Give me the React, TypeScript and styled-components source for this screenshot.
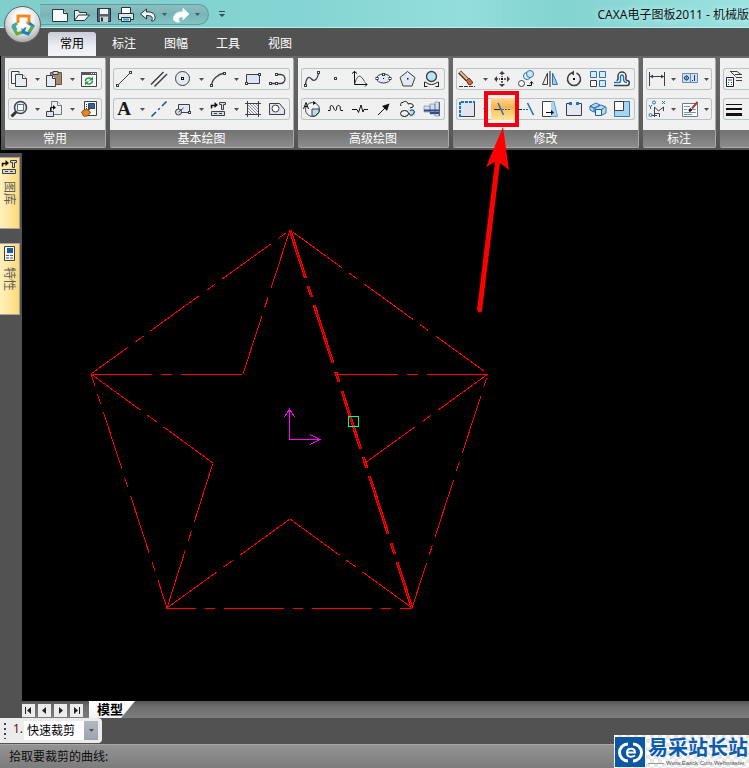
import React from "react";
import styled, { createGlobalStyle, css } from "styled-components";

const GlobalStyle = createGlobalStyle`
  * { box-sizing: border-box; }
  html, body, #root { height: 100%; }
  body {
    margin: 0;
    background: #000;
    overflow: hidden;
    font: 12px/16px "Noto Sans", "Noto Sans CJK SC", sans-serif;
  }
  button, select { font: inherit; }
`;

const INK = "#3c3f44";
const BLUE = "#2a72b5";

/* ---------- Icons (16 x 16 grid) ---------- */

type GlyphProps = { children: React.ReactNode; size?: number };

const GlyphSvg = styled.svg`
  display: block;
  flex: none;
  overflow: visible;
`;

const Glyph = ({ children, size = 16 }: GlyphProps) => (
  <GlyphSvg width={size} height={size} viewBox="0 0 16 16" fill="none" stroke={INK} strokeWidth="1" aria-hidden="true">
    {children}
  </GlyphSvg>
);

const Node = ({ x, y }: { x: number; y: number }) => (
  <rect x={x - 1} y={y - 1} width="2" height="2" fill="#fff" stroke={INK} />
);

const icons: Record<string, React.ReactNode> = {
  copy: (
    <>
      <path d="M4.5 12.5h-4V.5h7.500v2" fill="#f4f4f4" />
      <path d="M4.500 3.500h7l4 4v8h-11z" fill="#e9ecf1" />
      <path d="M11.500 3.500v4h4" fill="#fff" />
    </>
  ),
  paste: (
    <>
      <path d="M4.500 1.500h11v12h-11z" fill="#a28a6e" stroke="#6a5540" />
      <path d="M7 .5h5v3H7z" fill="#d8dade" />
      <path d="M.5 4.500h6l3 3v8h-9z" fill="#e6ebf4" />
      <path d="M6.500 4.500v3h3" fill="#fff" />
    </>
  ),
  refresh: (
    <>
      <path d="M.5 1.500h15v14H.5z" fill="#fafafa" />
      <path d="M0 1h16v3H0z" fill="#55585e" stroke="none" />
      <path d="M10 2.500h1M12 2.500h1M14 2.500h1" stroke="#fff" />
      <path d="M4.500 10c0-3 4-4 6-2M11.500 10c0 3-4 4-6 2" stroke="#1f9a3c" strokeWidth="1.500" />
      <path d="M12 5.500v4H8zM4 14.500v-4h4z" fill="#1f9a3c" stroke="none" />
    </>
  ),
  zoom: (
    <>
      <path d="M5.500 10.500l-5 5" stroke="#333" strokeWidth="3" />
      <circle cx="9.500" cy="6.500" r="6" fill="#d9edf6" strokeWidth="1.500" />
      <rect x="6.500" y="3.500" width="6" height="6" fill="#fff" stroke="#68727a" />
    </>
  ),
  move: (
    <>
      <path d="M5.500.5h6l4 4v9h-10z" fill="#eceef2" stroke="#73777e" />
      <path d="M11.500.5v4h4" fill="#fff" stroke="#73777e" />
      <path d="M.5 10.500h7v5h-7z" fill="#dfe3ea" />
      <path d="M4.500 10V6.500h3" stroke="#111" />
      <path d="M7 4v5l3-2.500z" fill="#111" stroke="none" />
    </>
  ),
  brush: (
    <>
      <path d="M3.500.5h12v14h-12z" fill="#fdfdfd" />
      <path d="M7.500 2.500h6v5h-6z" fill="#2b62a8" stroke="#1c4780" />
      <path d="M5 3.500h1M5 5.500h1M5 7.500h1" />
      <path d="M.5 11c2-2 4-3 6-2l3 2c-1 3-4 5-7 4z" fill="#e48a25" stroke="#8a4a10" />
      <path d="M7 9l3-3" stroke="#7a3a10" strokeWidth="2" />
    </>
  ),
  line: (
    <>
      <path d="M1.500 14.500l13-13" />
      <Node x={1.5} y={14.5} />
      <Node x={14.5} y={1.5} />
    </>
  ),
  parallel: <path d="M0 13.500L12.500 1M3.500 15.500L16 3" strokeWidth="1.500" />,
  circle: (
    <>
      <circle cx="7.500" cy="7.500" r="7" fill="#e4e9f3" />
      <rect x="6.500" y="6.500" width="2" height="2" fill="#fff" stroke="#111" />
    </>
  ),
  arc: (
    <>
      <path d="M1.500 14.500C2 8 8 3 14.500 2" strokeWidth="1.300" />
      <Node x={1.5} y={14.5} />
      <Node x={14.5} y={2.5} />
    </>
  ),
  rect: (
    <>
      <path d="M1.500 3.500h13v9h-13z" fill="#dde3ef" />
      <Node x={1.5} y={12.5} />
      <Node x={14.5} y={3.5} />
    </>
  ),
  polyline: (
    <>
      <path d="M1.500 12.500h6M7.500 3.500h4a4.500 4.500 0 0 1 0 9h-3" strokeWidth="1.300" />
      <Node x={1.5} y={12.5} />
      <Node x={7.5} y={12.5} />
      <Node x={7.5} y={3.5} />
    </>
  ),
  text: (
    <text x="8" y="14" textAnchor="middle" fontFamily="Liberation Serif, serif" fontWeight="700" fontSize="19" fill="#16181c" stroke="none">
      A
    </text>
  ),
  center: <path d="M.5 15.500l4.500-4.500M7.200 8.800l1.600-1.600M11 5l4.500-4.500" stroke="#14509a" strokeWidth="1.500" />,
  block: (
    <>
      <path d="M3.500 3.500h11v8h-11z" fill="#e4e8f0" />
      <circle cx="3.500" cy="11" r="3" fill="#d7dbe2" />
      <path d="M3.500 11l5-4" />
      <Node x={14.5} y={11.5} />
    </>
  ),
  library: (
    <>
      <path d="M1.500 7.500v-3h4" stroke="#111" strokeWidth="1.500" />
      <path d="M4.500 1v6l3.500-3z" fill="#111" stroke="none" />
      <path d="M9.500 1.500h6v2h-2v5h-2v-5h-2z" fill="#d7dbe2" />
      <path d="M1.500 10.500h13v4h-13z" fill="#d7dbe2" />
      <path d="M4 12.500h3M9 12.500h3" />
    </>
  ),
  hatch: (
    <>
      <path d="M2.500 0v16M13.500 0v16M0 2.500h16M0 13.500h16" />
      <path d="M3 10l3 3M3 7l6 6M3 4l9 9M5 3l8 8M8 3l5 5M11 3l2 2" stroke="#8b9099" />
    </>
  ),
  hole: (
    <>
      <path d="M.5 2.500h10l5 6v5H.5z" fill="#e1e5ec" />
      <circle cx="6.500" cy="7.500" r="3.500" fill="#fff" />
    </>
  ),
  spline: (
    <>
      <path d="M1.500 14.500C2 6 5 5 7.500 8s6 1 7-6" strokeWidth="1.300" />
      <Node x={1.5} y={14.5} />
      <Node x={14.5} y={1.5} />
    </>
  ),
  point: <Node x={7.5} y={7.5} />,
  curve: (
    <>
      <path d="M2.500 0v13.500H15M0 2.500L2.500.5 5 2.500M13 11.500l2 2-2 2" stroke="#111" />
      <path d="M2.500 13.500c3-11 6-10 10-3" />
    </>
  ),
  ellipse: (
    <>
      <ellipse cx="7.500" cy="7.500" rx="7" ry="4.500" fill="#e4e8f0" />
      <Node x={7.5} y={3.5} />
      <Node x={1} y={7.5} />
      <Node x={14} y={7.5} />
      <rect x="7" y="7" width="1" height="1" fill="#111" stroke="none" />
    </>
  ),
  polygon: (
    <>
      <path d="M7.500.5l7.500 6-3 8.500H3L0 6.500z" fill="#e4e8f0" />
      <rect x="7" y="7" width="1.500" height="1.500" fill="#111" stroke="none" />
    </>
  ),
  bulb: (
    <>
      <circle cx="7.500" cy="5.500" r="5" fill="#b8e6f6" strokeWidth="1.300" />
      <path d="M.5 16v-5M14.500 16v-5M.5 11c2 0 3 2.500 7 2.500s5-2.500 7-2.500M.5 15.500h3M11.500 15.500h3" stroke="#222" />
    </>
  ),
  sector: (
    <>
      <circle cx="8.500" cy="8.500" r="7" fill="#f3f5f8" />
      <path d="M8 8h7v3l-4 4H8z" fill="#b6dcee" />
      <path d="M-.5 8L2 1.500 4.500 8M.5 5.500h3" stroke="#111" />
      <path d="M9 4V0l3 2z" fill="#111" stroke="none" />
    </>
  ),
  wave: (
    <path
      d="M0 9.500h2c1 0-1-5 1.500-5s2 5 4 5 0-5 3-5 1 5 2.500 5h2"
      stroke="#111"
    />
  ),
  breakline: <path d="M0 8.500h5l1.500 3L9 4l2 7 1-2.500h4" stroke="#111" />,
  arrow: (
    <>
      <path d="M2 14l7-7" stroke="#111" />
      <path d="M13.500 2.500L11 10 6 5z" fill="#111" stroke="none" />
    </>
  ),
  gears: (
    <>
      <path d="M8 8l7 1v6l-5 1z" fill="#bde3f3" stroke="none" />
      <path d="M1 5c-1-2 0-4 2-3.500C5-1 8 1 8 3c3-1 6 0 5 3l-3 1" stroke="#111" />
      <ellipse cx="4.500" cy="12.500" rx="4" ry="3" stroke="#111" />
      <path d="M10 10c2-2 5-1 4 2s-5 3-5 0" stroke="#111" />
    </>
  ),
  shaft: (
    <>
      <path d="M0 5h6v6H0zM6 3h5v10H6zM11 1h4v14h-4z" fill="#d5deec" stroke="#5a6a88" strokeWidth=".5" />
      <path d="M0 9.500h15M6 12h9" stroke="#2f4f88" strokeWidth="2" />
      <path d="M15.500 1v14" stroke="#52617e" />
    </>
  ),
  erase: (
    <>
      <path d="M.5 1l8 8" stroke="#4a3424" strokeWidth="4" />
      <path d="M1 1l8 8" stroke="#e9c088" strokeWidth="2" />
      <path d="M7.500 9.500l2.500-2.500 3.500 4c0 2-2 3.500-4 2.500z" fill="#d0673a" stroke="#6b2a10" />
      <path d="M0 15.500h16" stroke="#333" strokeDasharray="4 1" />
    </>
  ),
  pan: (
    <>
      <path d="M8 2v4M8 10v4M2 8h4M10 8h4" strokeDasharray="2 1" strokeWidth="1.500" />
      <path d="M8 0l3 3H5zM8 16l3-3H5zM0 8l3-3v6zM16 8l-3-3v6z" fill={INK} stroke="none" />
      <rect x="7" y="7" width="2" height="2" fill="#111" stroke="none" />
    </>
  ),
  duplicate: (
    <>
      <circle cx="9" cy="5" r="3.500" stroke={BLUE} fill="#e2f1fb" />
      <circle cx="12" cy="3" r="3.500" stroke={BLUE} fill="#cfe8f8" />
      <circle cx="3.500" cy="12.500" r="3" fill="#fff" />
      <path d="M9 14.500h4.500V11M12 12.500l1.500-2 1.500 2" stroke="#111" />
    </>
  ),
  mirror: (
    <>
      <path d="M5.500 2v11.500H.5z" fill="#e9e9e9" />
      <path d="M10.500 2v11.500h5z" fill="#9dd0ee" stroke={BLUE} />
      <path d="M8 0v16" stroke="#222" />
    </>
  ),
  rotate: (
    <>
      <path d="M5.500 2a6.500 6.500 0 1 0 5 0" strokeWidth="1.500" />
      <path d="M8-.5v5L4.500 2z" fill={INK} stroke="none" />
      <rect x="7" y="7" width="2" height="2" fill="#111" stroke="none" />
    </>
  ),
  array: (
    <>
      <path d="M.5.5h6v6h-6zM9.500.5h6v6h-6zM9.500 9.500h6v6h-6z" fill="#d6ecfa" stroke={BLUE} />
      <path d="M.5 9.500h6v6h-6z" fill="#fff" />
    </>
  ),
  offset: (
    <>
      <path
        d="M2.500 9.500c2 0 1.500-2 1.500-4.500a4 4 0 0 1 8 0c0 2.500-.5 4.500 1 4.500 3 0 3 5 0 5H0"
        fill="#fff"
        strokeWidth="1.500"
      />
      <path d="M0 11.500h5c2 0 1.500-2 1.500-6a1.500 1.500 0 0 1 3 0c0 4 0 6 3.500 6" stroke="#1c74c4" strokeWidth="1.500" />
    </>
  ),
  select: (
    <>
      <path d="M.5.5h15v15H.5z" fill="#e2e5ee" />
      <path d="M1 16V1H16" stroke="#e2e5ee" strokeWidth="2" />
      <path d="M1 16V1H16" stroke="#1c74c4" strokeWidth="2" strokeDasharray="3 1" />
    </>
  ),
  trim: (
    <>
      <path d="M4 2l5.500 12" stroke="#176fc0" strokeWidth="1.500" />
      <path d="M0 8.500h6" stroke="#222" />
      <path d="M8 8.500h8" stroke="#176fc0" strokeDasharray="2 1" />
    </>
  ),
  extend: (
    <>
      <path d="M9.500 2l6 12" stroke="#176fc0" strokeWidth="1.500" />
      <path d="M-1 8.500h5" stroke="#222" />
      <path d="M5 8.500h6" stroke="#176fc0" strokeDasharray="2 1" />
    </>
  ),
  stretch: (
    <>
      <path d="M9.500.5h2.500l3.500 15h-6z" fill="#a8d6ef" stroke="#6aa5cf" />
      <path d="M9.500.5h-9v15h9" fill="#fff" />
      <path d="M4 11.500h6" stroke="#111" />
      <path d="M9 9v5l3-2.500z" fill="#111" stroke="none" />
    </>
  ),
  split: (
    <>
      <path d="M3.500 2.500h-3v12h15v-12h-3" fill="#e4e8f0" />
      <path d="M3 1h3v3H3zM10 1h3v3h-3z" fill="#1c74c4" stroke="none" />
    </>
  ),
  explode: (
    <>
      <path d="M0 5l6-3 4 2-6 3zM0 5v4l4 2V7zM5 7l6-3 5 2v6l-4 2-7-2z" fill="#b5dcf2" stroke={BLUE} />
      <path d="M5.500 8.500h6v6h-6zM11.500 8.500l3-2" fill="#e7f4fc" stroke="#1c5d9c" />
    </>
  ),
  scale: (
    <>
      <path d="M.5.5h15v15H.5z" fill="#a9d4ec" stroke="#337fb8" />
      <path d="M.5.5h9v9h-9z" fill="#fff" />
    </>
  ),
  dimension: (
    <>
      <path d="M.5 1v14M15.500 1v14M1 5.500h14" />
      <path d="M1 5.500l3-2v4zM15 5.500l-3-2v4z" fill={INK} stroke="none" />
    </>
  ),
  tolerance: (
    <>
      <path d="M.5 2.500h15v9H.5z" fill="#cfe2f4" stroke="#6d88a8" />
      <path d="M8.500 3v8" stroke="#6d88a8" />
      <circle cx="4.500" cy="7" r="2" stroke="#123c78" />
      <path d="M1.500 7h6M4.500 4v6" stroke="#123c78" strokeWidth=".5" />
      <path d="M12.500 4v6M10 9.500h1" stroke="#123c78" />
    </>
  ),
  coordinate: (
    <>
      <path d="M5.500 16V6l4 4 5-4v4M5.500 12.500h5V16M3 14.500h5" />
      <circle cx="5" cy="1.500" r="1.500" stroke={BLUE} />
      <path d="M13 0l3 3M16 0l-3 3M0 4l1.500 2L3 4M1.500 6v2" stroke={BLUE} />
      <circle cx="1.500" cy="14" r="1.500" stroke={BLUE} />
    </>
  ),
  edit: (
    <>
      <path d="M.5 2.500h15v13H.5z" fill="#fff" stroke="#6b7a90" />
      <path d="M2 5.500h6M2 8.500h3M10 8.500h4M2 11.500h12M2 13.500h8" stroke="#7793b5" />
      <path d="M7 10c0-2 1-3 2-2l1 1c-1 1-2 2-3 1z" fill="#222" stroke="#222" />
      <path d="M10 7.500L15.500 1" stroke="#a8401c" strokeWidth="2" />
    </>
  ),
  style: (
    <>
      <path d="M4 .5h7l4 3M9 3.500h7M10 6.500h6M10 9.500h6M4.500 .5l5 5" />
      <path d="M.5 6.500h7v9h-7z" fill="#fff" stroke="#222" />
      <path d="M2 9h4M2 11.500h1M5 11.500h1M2 13.500h1M5 13.500h1" stroke="#1c5d9c" />
    </>
  ),
  weight: (
    <>
      <path d="M0 3.500h16" stroke="#111" />
      <path d="M0 8h16" stroke="#111" strokeWidth="2" />
      <path d="M0 13.500h16" stroke="#111" strokeWidth="3" />
    </>
  ),
  newFile: (
    <>
      <path d="M.5 2.500h11l4 4v8H.5z" fill="#f7fafc" stroke="#26343b" />
      <path d="M11.500 2.500v4h4" fill="#c8d4da" stroke="#26343b" />
    </>
  ),
  open: (
    <>
      <path d="M.5 14V3.500h4l1 2h7V8" fill="#e7eef0" stroke="#26343b" />
      <path d="M.5 13.500l4-5.500h11l-5 5.500z" fill="#f3f7f8" stroke="#26343b" />
    </>
  ),
  save: (
    <>
      <path d="M1.500 1.500h13v13h-13z" fill="#56616b" stroke="#26343b" />
      <path d="M4 2h8v5H4z" fill="#eef3f6" stroke="none" />
      <path d="M4 9.500h8V15H4z" fill="#c9d2d8" stroke="none" />
      <path d="M5 10.500h2v4H5z" fill="#26343b" stroke="none" />
    </>
  ),
  print: (
    <>
      <path d="M3.500 6V.5h9V6" fill="#fff" stroke="#26343b" />
      <path d="M.5 6.500h15v6H.5z" fill="#dfe6e9" stroke="#26343b" />
      <path d="M3.500 10.500h9v4h-9z" fill="#e8f8ff" stroke="#26343b" />
      <path d="M5 12.500h6" stroke="#1aa5d8" strokeWidth="2" />
    </>
  ),
  undo: (
    <path d="M.5 7l6-5v3c6-.5 9 2 8.500 7l-1.500 2h-2c2-4 0-5.500-5-5.500V12z" fill="#eef4f5" stroke="#26343b" />
  ),
  redo: <path d="M16 7l-6-5.500V5C3 4.500 0 8 .5 13l3 2h3c-2-4 0-5.500 3.500-5V13z" fill="#fff" stroke="#e9f8f8" />,
};

/* ---------- Title bar ---------- */

const Page = styled.div`
  position: relative;
  display: flex;
  flex-direction: column;
  height: 100vh;
  min-width: 0;
  overflow: hidden;
  background: #000;
`;

const TitleBar = styled.header`
  display: flex;
  align-items: center;
  flex: none;
  height: 28px;
  padding: 0 0 0 40px;
  background: linear-gradient(90deg, #7fcfcd 0%, #84d4d3 40%, #93dedc 62%, #82d3d1 75%, #9be2e0 100%);
  border-bottom: 1px solid #b9ecea;
`;

const QuickBar = styled.div`
  display: flex;
  align-items: center;
  flex: none;
  height: 21px;
  width: 169px;
  padding-left: 9px;
  margin-top: 2px;
  gap: 1px;
  border: 1px solid #5f9da0;
  border-left: 0;
  border-radius: 0 11px 11px 0;
  background: linear-gradient(#8dbfc1, #79b4b7 50%, #84c3c4);
`;

const QuickButton = styled.button<{ $slim?: boolean }>`
  display: flex;
  align-items: center;
  justify-content: center;
  flex: none;
  width: ${(p) => (p.$slim ? 10 : 21)}px;
  height: 18px;
  padding: 0;
  border: 0;
  background: none;
`;

const MoreButton = styled(QuickButton)`
  margin-left: 8px;
`;

const Title = styled.h1`
  margin: 3px 0 0 auto;
  font-size: 12px;
  line-height: 16px;
  font-weight: 400;
  white-space: nowrap;
  color: #0c1416;
  text-shadow: 0 0 6px #dffafa;
`;

const Orb = styled.button`
  position: absolute;
  left: 4px;
  top: 6px;
  z-index: 3;
  width: 37px;
  height: 37px;
  padding: 0;
  display: grid;
  place-items: center;
  border: 1px solid #5c6365;
  border-radius: 50%;
  background: radial-gradient(circle at 50% 35%, #fff 0 25%, #d8d8d8 55%, #a0a0a0 85%, #e8e8e8 100%);
`;

/* ---------- Tabs ---------- */

const TabBar = styled.nav`
  display: flex;
  align-items: flex-end;
  flex: none;
  height: 28px;
  padding-left: 46px;
  background: #525252;
`;

const Tab = styled.button<{ $active?: boolean }>`
  width: 52px;
  height: 26px;
  padding: 0;
  border: 2px solid transparent;
  border-bottom: 0;
  border-radius: 5px 5px 0 0;
  background: none;
  color: #fff;
  ${(p) =>
    p.$active &&
    css`
      color: #000;
      background: linear-gradient(#c9ccd6, #eceef4 60%, #f3f4f8) padding-box;
    `}
`;

/* ---------- Ribbon ---------- */

const Ribbon = styled.section`
  position: relative;
  z-index: 2;
  display: flex;
  flex: none;
  gap: 4px;
  height: 94px;
  padding: 2px 0 2px 4px;
  margin-left: 1px;
  background: linear-gradient(#686868, #5c5c5c 80%, #505050);
`;

const Panel = styled.section`
  display: flex;
  flex-direction: column;
  flex: none;
  border: 1px solid #a9a9a9;
  border-width: 0 1px 1px 0;
  border-radius: 2px;
  background: #7c7c7c;
`;

const PanelBody = styled.div`
  display: flex;
  flex-direction: column;
  flex: none;
  gap: 8px;
  height: 72px;
  padding: 10px 3px 0 3px;
  background: #f0f0f0;
`;

const PanelTitle = styled.h2`
  flex: 1;
  margin: 0;
  font-size: 12px;
  line-height: 17px;
  font-weight: 400;
  text-align: center;
  color: #fff;
  background: linear-gradient(#727272, #8b8b8b);
`;

const ToolRow = styled.div`
  display: flex;
  flex: none;
  height: 22px;
  border-radius: 3px;
  box-shadow: inset 0 0 0 1px #b9c4c6;
`;

const ToolButton = styled.button<{ $narrow?: boolean; $active?: boolean }>`
  position: relative;
  display: flex;
  align-items: center;
  width: ${(p) => (p.$narrow ? 22 : 24)}px;
  height: 22px;
  padding: 0 0 0 3px;
  border: 0;
  border-radius: 1px;
  background: ${(p) => (p.$active ? "linear-gradient(#ffd896, #ffb04a 45%, #ffc868 60%, #ffe596)" : "none")};
`;

const DropButton = styled.button`
  display: flex;
  align-items: center;
  justify-content: center;
  width: 11px;
  height: 22px;
  padding: 0;
  border: 0;
  background: none;
`;

const Highlight = styled.span`
  position: absolute;
  left: -7px;
  top: -7px;
  width: 35px;
  height: 36px;
  border: 4px solid #f00010;
  pointer-events: none;
`;

const Pointer = styled.svg`
  position: absolute;
  left: -15px;
  top: 28px;
  pointer-events: none;
`;

const Caret = ({ color = "#4c4f54" }: { color?: string }) => (
  <svg width="5" height="3" viewBox="0 0 5 3" aria-hidden="true">
    <path d="M0 0h5L2.500 3z" fill={color} />
  </svg>
);

/* [icon, label, has a menu] */
type Tool = [string, string, boolean?];
type Group = { title: string; narrow?: boolean; rows: Tool[][] };

const groups: Group[] = [
  {
    title: "常用",
    rows: [
      [["copy", "复制", true], ["paste", "粘贴", true], ["refresh", "刷新"]],
      [["zoom", "缩放", true], ["move", "移动", true], ["brush", "格式刷"]],
    ],
  },
  {
    title: "基本绘图",
    rows: [
      [["line", "直线", true], ["parallel", "平行线"], ["circle", "圆", true], ["arc", "圆弧", true], ["rect", "矩形"], ["polyline", "多段线"]],
      [["text", "文字", true], ["center", "中心线"], ["block", "块", true], ["library", "图库", true], ["hatch", "剖面线"], ["hole", "填充"]],
    ],
  },
  {
    title: "高级绘图",
    rows: [
      [["spline", "样条"], ["point", "点"], ["curve", "公式曲线"], ["ellipse", "椭圆"], ["polygon", "正多边形"], ["bulb", "局部放大"]],
      [["sector", "圆弧拟合"], ["wave", "波浪线"], ["breakline", "双折线"], ["arrow", "箭头"], ["gears", "齿形"], ["shaft", "孔/轴"]],
    ],
  },
  {
    title: "修改",
    rows: [
      [["erase", "删除", true], ["pan", "平移"], ["duplicate", "平移复制"], ["mirror", "镜像"], ["rotate", "旋转"], ["array", "阵列"], ["offset", "等距线"]],
      [["select", "选择", true], ["trim", "裁剪"], ["extend", "延伸"], ["stretch", "拉伸"], ["split", "打断"], ["explode", "分解"], ["scale", "缩放"]],
    ],
  },
  {
    title: "标注",
    narrow: true,
    rows: [
      [["dimension", "尺寸标注", true], ["tolerance", "形位公差", true]],
      [["coordinate", "坐标标注", true], ["edit", "标注编辑", true]],
    ],
  },
  {
    title: "",
    rows: [
      [["style", "样式", true], ["copy", "图层"]],
      [["weight", "线宽", true], ["copy", "颜色"]],
    ],
  },
];

/* ---------- Workspace ---------- */

const Workspace = styled.div`
  display: flex;
  flex: 1;
  min-height: 0;
`;

const Dock = styled.aside`
  display: flex;
  flex-direction: column;
  flex: none;
  width: 22px;
  margin-top: 3px;
  padding-top: 4px;
  gap: 14px;
  background: #525252;
`;

const DockTab = styled.button`
  display: flex;
  flex-direction: column;
  align-items: center;
  width: 20px;
  height: 72px;
  padding: 1px 2px 0 0;
  gap: 6px;
  border: 1px solid #a2a2a2;
  border-left: 0;
  background: linear-gradient(90deg, #fff0bd, #ffe7a0 50%, #ffd970);
  color: #5c5c5c;
`;

const DockLabel = styled.span`
  writing-mode: vertical-rl;
  text-orientation: sideways;
  line-height: 16px;
`;

const Main = styled.main`
  display: flex;
  flex-direction: column;
  flex: 1;
  min-width: 0;
`;

const Canvas = styled.svg`
  display: block;
  flex: 1;
  width: 100%;
  min-height: 0;
  background: #000;
`;

const SheetBar = styled.div`
  display: flex;
  align-items: center;
  flex: none;
  height: 17px;
  gap: 3px;
  background: linear-gradient(#555, #6d6d6d 30%, #7c7c7c);
`;

const SheetNav = styled.button`
  display: grid;
  place-items: center;
  width: 13px;
  height: 13px;
  margin-top: 2px;
  padding: 0;
  border: 0;
  background: #ececec;
`;

const SheetTab = styled.button`
  height: 17px;
  width: 46px;
  margin-left: 3px;
  padding: 0 0 0 8px;
  border: 0;
  clip-path: polygon(0 0, 100% 0, 70% 100%, 0 100%);
  background: linear-gradient(#fff, #f2f2f4);
  font-size: 13px;
  line-height: 17px;
  font-weight: 700;
  text-align: left;
  white-space: nowrap;
  color: #000;
`;

const OptionBar = styled.div`
  display: flex;
  flex: none;
  height: 26px;
  padding-bottom: 1px;
  background: #525252;
`;

const OptionBox = styled.div`
  display: flex;
  align-items: center;
  width: 102px;
  padding: 0 4px 0 4px;
  border-radius: 0 4px 4px 0;
  background: #ececec;
`;

const Grip = styled.span`
  width: 2px;
  height: 16px;
  background: repeating-linear-gradient(#444 0 2px, transparent 2px 5px);
`;

const OptionLabel = styled.label`
  width: 18px;
  padding-left: 7px;
  margin-top: -4px;
  color: #5a1010;
`;

const SelectWrap = styled.div`
  display: grid;
  grid-template-columns: 1fr 14px;
  flex: 1;
  height: 19px;
  background: linear-gradient(#b3b8c0, #9da3ad) right / 14px 100% no-repeat #fff;
  align-items: center;
  justify-items: center;
`;

const OptionSelect = styled.select`
  grid-area: 1 / 1 / 2 / 3;
  width: 100%;
  height: 19px;
  padding: 0 0 0 3px;
  border: 0;
  appearance: none;
  background: none;
  line-height: 19px;
  color: #000;
`;

const SelectCaret = styled.span`
  grid-area: 1 / 2;
  display: grid;
  pointer-events: none;
`;

const StatusBar = styled.footer`
  display: flex;
  align-items: center;
  flex: none;
  height: 24px;
  padding-left: 9px;
  border-top: 1px solid #a8a8a8;
  background: linear-gradient(#939393, #7c7c7c);
  color: #0c0c0c;
`;

/* ---------- Site mark ---------- */

const SiteMark = styled.div`
  position: absolute;
  right: 0;
  bottom: 0;
  z-index: 4;
  display: flex;
  align-items: center;
  gap: 3px;
  width: 135px;
  height: 33px;
  padding-left: 1px;
  background: repeating-conic-gradient(#e6e6e6 0 25%, #fff 0 50%) 0 0 / 8px 8px;
`;

const SiteLogo = styled.svg`
  flex: none;
`;

const SiteWords = styled.div`
  display: flex;
  flex-direction: column;
  color: #0b5cad;
  white-space: nowrap;
`;

const SiteName = styled.strong`
  font-size: 20px;
  line-height: 24px;
  font-weight: 700;
`;

const SiteUrl = styled.small`
  display: flex;
  align-items: center;
  gap: 2px;
  font: 6px/7px "Liberation Sans", sans-serif;
  color: #555;
  &::before {
    content: "";
    width: 16px;
    height: 1px;
    background: #999;
  }
`;

/* ---------- Drawing data ---------- */

type Stroke = { d: string; dash: string; offset: number; color?: string };

const INNER = "61 9 11 9";
const OUTER = "60 9 10 9";

const strokes: Stroke[] = [
  { d: "M290 230L243 374", dash: INNER, offset: 0 },
  { d: "M91 374.500H243", dash: INNER, offset: 0 },
  { d: "M91 374L213 463", dash: INNER, offset: 0 },
  { d: "M167 608L213 463", dash: INNER, offset: 0 },
  { d: "M167 608L290 519", dash: INNER, offset: 0 },
  { d: "M412 608L290 519", dash: INNER, offset: 0 },
  { d: "M488 374L365 463", dash: INNER, offset: 0 },
  { d: "M337 374.500H488", dash: INNER, offset: 0 },
  { d: "M166 608.500H412", dash: OUTER, offset: 30 },
  { d: "M167 608L91 374", dash: OUTER, offset: 30 },
  { d: "M412 608L488 374", dash: OUTER, offset: 13 },
  { d: "M290 230L488 374", dash: OUTER, offset: 84 },
  { d: "M290 230L91 374", dash: OUTER, offset: 64 },
  { d: "M290 230L412 608", dash: INNER, offset: 11, color: "#a00000" },
  { d: "M289 230L411 608", dash: INNER, offset: 11 },
  { d: "M291 230L413 608", dash: INNER, offset: 11 },
];

const navIcons: [string, string][] = [
  ["首页", "M2 2h1v7H2zM8 2v7L4 5.500z"],
  ["上一页", "M7 2v7L3 5.500z"],
  ["下一页", "M4 2v7l4-3.500z"],
  ["末页", "M8 2h1v7H8zM3 2v7l4-3.500z"],
];

const quickTools: [string, string, boolean?][] = [
  ["newFile", "新建"],
  ["open", "打开"],
  ["save", "保存"],
  ["print", "打印"],
  ["undo", "撤销", true],
  ["redo", "重做", true],
];

export default function App() {
  return (
    <Page>
      <GlobalStyle />
      <TitleBar>
        <QuickBar>
          {quickTools.map(([icon, label, drop]) => (
            <React.Fragment key={icon}>
              <QuickButton aria-label={label}>
                <Glyph>{icons[icon]}</Glyph>
              </QuickButton>
              {drop && (
                <QuickButton $slim aria-label={`${label}列表`}>
                  <Caret color="#3b5c60" />
                </QuickButton>
              )}
            </React.Fragment>
          ))}
        </QuickBar>
        <MoreButton $slim aria-label="自定义">
          <svg width="6" height="6" viewBox="0 0 6 6" aria-hidden="true">
            <path d="M0 0h6v1H0zM0 3h6L3 6z" fill="#2d5054" />
          </svg>
        </MoreButton>
        <Title>CAXA电子图板2011 - 机械版</Title>
      </TitleBar>
      <Orb aria-label="菜单">
        <svg width="26" height="26" viewBox="0 0 26 26" fill="none" strokeWidth="3" aria-hidden="true">
          <path d="M8 11V4h11v7h-4" stroke="#f08a1c" />
          <path d="M7 11l-4 4 4 7 6-2v-4" stroke="#5fb030" />
          <path d="M19 11l4 3-5 8-5-2 2-5" stroke="#1d7fc8" />
          <path d="M3 12l3 6" stroke="#35a4d8" />
          <path d="M19 20l4-6" stroke="#5fb030" />
          <path d="M10 9h6l1 5-4 3-4-3z" fill="#fff" />
        </svg>
      </Orb>
      <TabBar>
        {["常用", "标注", "图幅", "工具", "视图"].map((t, i) => (
          <Tab key={t} $active={i === 0}>
            {t}
          </Tab>
        ))}
      </TabBar>
      <Ribbon>
        {groups.map((g, gi) => (
          <Panel key={gi}>
            <PanelBody>
              {g.rows.map((row, ri) => (
                <ToolRow key={ri}>
                  {row.map(([icon, label, drop]) => (
                    <React.Fragment key={label}>
                      <ToolButton aria-label={label} $narrow={g.narrow} $active={icon === "trim"}>
                        <Glyph>{icons[icon]}</Glyph>
                        {icon === "trim" && (
                          <>
                            <Highlight />
                            <Pointer width="40" height="190" viewBox="0 0 40 190" aria-hidden="true">
                              <path d="M27 1L10 41l9-5L1 184q2 5 5 1L24 37l9 7z" fill="#f00" />
                            </Pointer>
                          </>
                        )}
                      </ToolButton>
                      {drop && (
                        <DropButton aria-label={`${label}列表`}>
                          <Caret />
                        </DropButton>
                      )}
                    </React.Fragment>
                  ))}
                </ToolRow>
              ))}
            </PanelBody>
            <PanelTitle>{g.title}</PanelTitle>
          </Panel>
        ))}
      </Ribbon>
      <Workspace>
        <Dock>
          <DockTab>
            <Glyph>{icons.library}</Glyph>
            <DockLabel>图库</DockLabel>
          </DockTab>
          <DockTab>
            <Glyph>
              <path d="M3.500 1.500h10v14h-10z" fill="#f4f4f4" />
              <path d="M6 3h6v5H6z" fill="#1f5aa0" stroke="none" />
              <path d="M5 10.500h3M9 10.500h3M5 13h3M9 13h3" stroke="#555" />
            </Glyph>
            <DockLabel>特性</DockLabel>
          </DockTab>
        </Dock>
        <Main>
          <Canvas role="img" aria-label="五角星图形" shapeRendering="crispEdges">
            <g transform="translate(-22 -150)" fill="none">
              {strokes.map((s) => (
                <path key={s.d} d={s.d} stroke={s.color ?? "#f00"} strokeDasharray={s.dash} strokeDashoffset={s.offset} />
              ))}
              <path d="M289.500 409v30.500H320M284.500 417l5-8 5 8M310 434.500l10 5-10 5" stroke="#f0f" />
              <rect x="348.500" y="416.500" width="10" height="10" stroke="#00ff80" />
            </g>
          </Canvas>
          <SheetBar>
            {navIcons.map(([label, d]) => (
              <SheetNav key={label} aria-label={label}>
                <svg width="11" height="11" viewBox="0 0 11 11" aria-hidden="true">
                  <path d={d} fill="#222" />
                </svg>
              </SheetNav>
            ))}
            <SheetTab>模型</SheetTab>
          </SheetBar>
        </Main>
      </Workspace>
      <OptionBar>
        <OptionBox>
          <Grip />
          <OptionLabel htmlFor="trim-mode">1.</OptionLabel>
          <SelectWrap>
            <OptionSelect id="trim-mode">
              <option>快速裁剪</option>
            </OptionSelect>
            <SelectCaret>
              <Caret />
            </SelectCaret>
          </SelectWrap>
        </OptionBox>
      </OptionBar>
      <StatusBar>拾取要裁剪的曲线:</StatusBar>
      <SiteMark>
        <SiteLogo width="30" height="30" viewBox="0 0 30 30" fill="none" aria-hidden="true">
          <path d="M0 0h30v30H0z" fill="#0b57a4" />
          <path d="M13 7a8.500 8.500 0 0 0 0 17M18 7a8.500 8.500 0 0 1 0 17" stroke="#fff" strokeWidth="3" />
          <path d="M11 15.500h9c0-5-8-5-8 0s5 5 8 3" stroke="#fff" strokeWidth="2" />
        </SiteLogo>
        <SiteWords>
          <SiteName>易采站长站</SiteName>
          <SiteUrl>Www.Easck.Com Webmaster</SiteUrl>
        </SiteWords>
      </SiteMark>
    </Page>
  );
}
